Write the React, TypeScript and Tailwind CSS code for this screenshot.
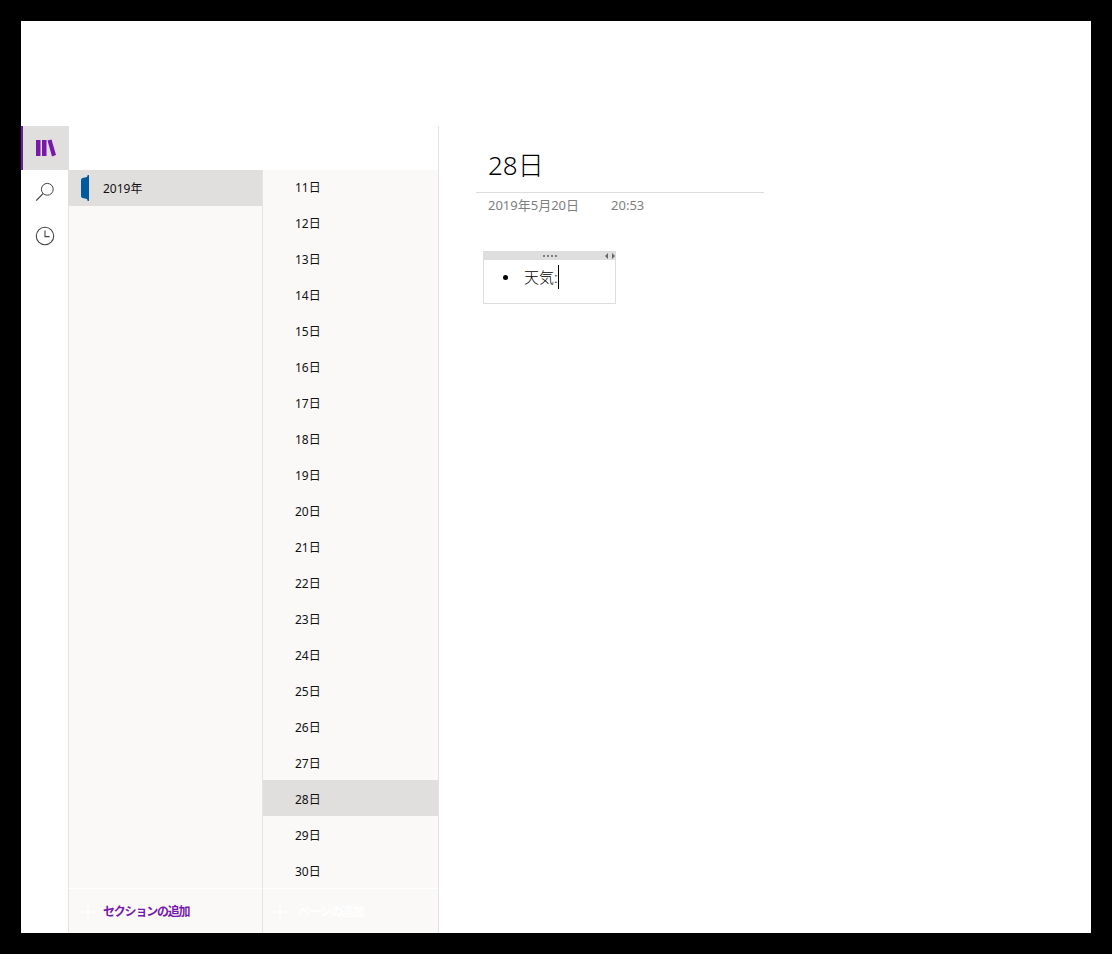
const PAGES = [11, 12, 13, 14, 15, 16, 17, 18, 19, 20, 21, 22, 23, 24, 25, 26, 27, 28, 29, 30];

function PlusIcon() {
  return (
    <svg className="h-4 w-4 shrink-0" viewBox="0 0 16 16" fill="none" stroke="#ffffff" strokeWidth="1">
      <path d="M8 0v16M0 8h16" />
    </svg>
  );
}

export default function App() {
  return (
    <div
      className="h-[954px] overflow-hidden bg-black p-[21px] text-black"
      style={{ fontFamily: '"Noto Sans", "Noto Sans CJK JP", sans-serif' }}
    >
      <div className="flex h-full flex-col bg-white">
        <div className="h-[105px] shrink-0" />
        <div className="flex min-h-0 flex-1">
          {/* Rail */}
          <div className="flex w-[47px] shrink-0 flex-col">
            <div className="flex h-[44px] w-[48px] shrink-0 items-center justify-center border-l-2 border-[#7719aa] bg-[#e1dfdd]">
              <svg className="h-[18px] w-[20px]" viewBox="0 0 20 18" fill="#7719aa">
                <rect x="0" y="1" width="4.5" height="16" />
                <rect x="6" y="1" width="4.5" height="16" />
                <path d="M11.5 1.5 15.5 0.5 20 16 16 17.5z" />
              </svg>
            </div>
            <div className="flex h-[44px] items-center justify-center">
              <svg className="h-5 w-5" viewBox="0 0 20 20" fill="none" stroke="#444444" strokeWidth="1">
                <circle cx="12.3" cy="7.3" r="5.9" />
                <path d="M8 11.6 1.2 18.6" strokeWidth="1.3" />
              </svg>
            </div>
            <div className="flex h-[44px] items-center justify-center">
              <svg className="h-5 w-5" viewBox="0 0 20 20" fill="none" stroke="#444444" strokeWidth="1.1">
                <circle cx="10" cy="10" r="8.7" />
                <path d="M10 4.6V10.6H14.6" />
              </svg>
            </div>
          </div>

          {/* Sections */}
          <div className="flex w-[194px] shrink-0 flex-col">
            <div className="h-[44px] shrink-0" />
            <div className="min-h-0 flex-1 border-l border-[#e6e4e2] bg-[#faf9f8]">
              <div className="-ml-px flex h-[36px] items-center bg-[#e1dfdd] pl-[13px]">
                <svg className="h-[26px] w-[8px] shrink-0" viewBox="0 0 8 26" fill="#005a9e">
                  <path d="M1.5 3 6 2 6.5 0.2 8 0V26L6.5 25.8 6 24 1.5 23Q0 22.5 0 21V5Q0 3.5 1.5 3z" />
                </svg>
                <span className="mt-[1px] ml-[14px] text-[12px] text-[#111111]">2019年</span>
              </div>
            </div>
            <div className="flex h-[45px] shrink-0 items-center border-t border-l border-t-white border-l-[#e6e4e2] bg-[#faf9f8] pt-[1px] pl-[11px]">
              <PlusIcon />
              <span className="ml-[7px] text-[12px] font-bold tracking-[-1.2px] text-[#7719aa]">セクションの追加</span>
            </div>
          </div>

          {/* Pages */}
          <div className="flex w-[177px] shrink-0 flex-col border-r border-[#e6e4e2]">
            <div className="h-[44px] shrink-0" />
            <div className="min-h-0 flex-1 overflow-hidden border-l border-[#e6e4e2] bg-[#faf9f8]">
              <div className="-mt-[2px]">
                {PAGES.map((day) => (
                  <div
                    key={day}
                    className={`flex h-[36px] items-center pt-[4px] pl-[32px] text-[12px] text-[#111111] ${day === 28 ? 'bg-[#e1dfdd]' : ''}`}
                  >
                    {day}日
                  </div>
                ))}
              </div>
            </div>
            <div className="flex h-[45px] shrink-0 items-center border-t border-l border-t-white border-l-[#e6e4e2] bg-[#faf9f8] pt-[1px] pl-[9px]">
              <PlusIcon />
              <span className="ml-[10px] text-[12px] font-bold tracking-[-1px] text-white">ページの追加</span>
            </div>
          </div>

          {/* Note canvas */}
          <div className="min-w-0 flex-1 pt-[16px] pl-[37px]">
            <div className="w-[288px] border-b border-[#dddddd] pb-[4px] pl-[12px]">
              <div className="text-[26px] leading-[46px] font-light">28日</div>
            </div>
            <div className="mt-[2px] flex pl-[12px] text-[13px] leading-[20px] text-[#808080]">
              <span>2019年5月20日</span>
              <span className="ml-[32px]">20:53</span>
            </div>
            <div className="mt-[36px] ml-[7px] h-[53px] w-[133px] border border-[#dddddd]">
              <div className="grid h-[8px] grid-cols-[1fr_auto_1fr] items-center bg-[#dedede]">
                <div />
                <div className="flex gap-[2px]">
                  <span className="h-[2px] w-[2px] bg-[#808080]" />
                  <span className="h-[2px] w-[2px] bg-[#808080]" />
                  <span className="h-[2px] w-[2px] bg-[#808080]" />
                  <span className="h-[2px] w-[2px] bg-[#808080]" />
                </div>
                <svg className="h-[6px] w-[10px] justify-self-end" viewBox="0 0 10 6" fill="#666666">
                  <path d="M3 0V6L0 3zM7 0V6L10 3z" />
                </svg>
              </div>
              <div className="flex items-center pt-[5px] pl-[19px]">
                <span className="mt-[1px] h-[5px] w-[5px] rounded-full bg-black" />
                <span className="-mt-[1px] ml-[16px] text-[15px] leading-[24px] font-light">天気:</span>
                <span className="h-[24px] w-px bg-black" />
              </div>
            </div>
          </div>
        </div>
      </div>
    </div>
  );
}
